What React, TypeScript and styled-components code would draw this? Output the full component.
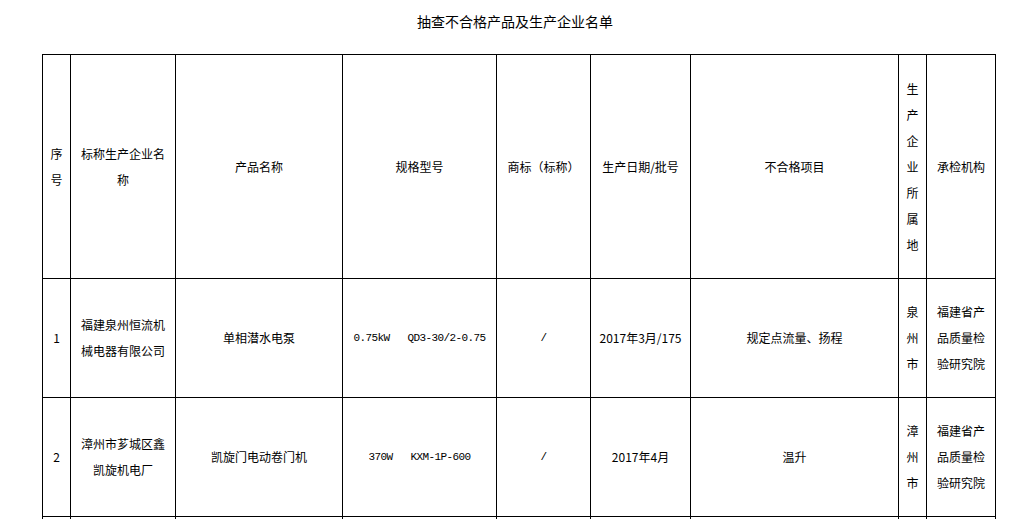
import React from 'react';
import styled, { createGlobalStyle } from 'styled-components';

const GlobalStyle = createGlobalStyle`
  html, body {
    margin: 0;
    padding: 0;
    background: #ffffff;
  }
  body {
    font-family: 'Noto Sans CJK SC', 'Noto Sans', sans-serif;
    color: #000000;
  }
`;

const columns = [28, 105, 167, 154, 94, 100, 208, 28, 69];

const headers = [
  '序号',
  '标称生产企业名称',
  '产品名称',
  '规格型号',
  '商标（标称）',
  '生产日期/批号',
  '不合格项目',
  '生产企业所属地',
  '承检机构',
];

const rows = [
  {
    no: '1',
    company: '福建泉州恒流机械电器有限公司',
    product: '单相潜水电泵',
    spec: '0.75kW   QD3-30/2-0.75',
    brand: '/',
    date: '2017年3月/175',
    item: '规定点流量、扬程',
    place: '泉州市',
    lab: '福建省产品质量检验研究院',
  },
  {
    no: '2',
    company: '漳州市芗城区鑫凯旋机电厂',
    product: '凯旋门电动卷门机',
    spec: '370W   KXM-1P-600',
    brand: '/',
    date: '2017年4月',
    item: '温升',
    place: '漳州市',
    lab: '福建省产品质量检验研究院',
  },
];

const App: React.FC = () => {
  return (
    <Page>
      <GlobalStyle />
      <Title>抽查不合格产品及生产企业名单</Title>
      <Table>
        <colgroup>
          {columns.map((w, i) => (
            <col key={i} style={{ width: w }} />
          ))}
        </colgroup>
        <thead>
          <tr>
            {headers.map((h) => (
              <HeadCell key={h}>{h}</HeadCell>
            ))}
          </tr>
        </thead>
        <tbody>
          {rows.map((r) => (
            <Row key={r.no}>
              <Cell>{r.no}</Cell>
              <Cell>{r.company}</Cell>
              <Cell>{r.product}</Cell>
              <MonoCell>{r.spec}</MonoCell>
              <MonoCell>{r.brand}</MonoCell>
              <Cell>{r.date}</Cell>
              <Cell>{r.item}</Cell>
              <Cell>{r.place}</Cell>
              <Cell>{r.lab}</Cell>
            </Row>
          ))}
          <Row>
            {columns.map((_, i) => (
              <Cell key={i} />
            ))}
          </Row>
        </tbody>
      </Table>
    </Page>
  );
};

const Page = styled.div`
  width: 1025px;
  padding-bottom: 20px;
`;

const Title = styled.h1`
  margin: 0;
  padding: 11px 0 0 5px;
  height: 54px;
  box-sizing: border-box;
  font-size: 14px;
  line-height: 20px;
  font-weight: 400;
  text-align: center;
`;

const Table = styled.table`
  margin-left: 42px;
  width: 954px;
  table-layout: fixed;
  border-collapse: collapse;
`;

const HeadCell = styled.th`
  height: 223px;
  padding: 0 5px;
  border: 1px solid #000000;
  font-size: 12px;
  line-height: 26px;
  font-weight: 400;
  text-align: center;
  vertical-align: middle;
  word-break: break-all;
`;

const Row = styled.tr`
  height: 119px;
`;

const Cell = styled.td`
  padding: 0 5px;
  border: 1px solid #000000;
  font-size: 12px;
  line-height: 26px;
  text-align: center;
  vertical-align: middle;
  word-break: break-all;
`;

const MonoCell = styled(Cell)`
  font-family: 'Liberation Mono', 'DejaVu Sans Mono', monospace;
  font-size: 11px;
  letter-spacing: -0.6px;
  white-space: pre;
`;

export default App;
